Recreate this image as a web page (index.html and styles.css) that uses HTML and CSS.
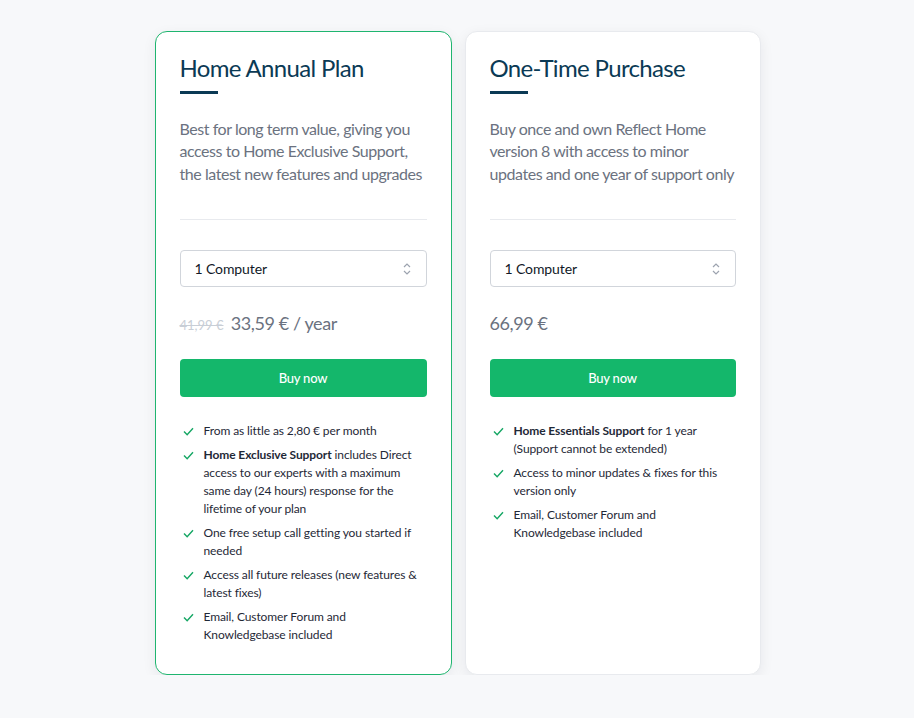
FILE: index.html
```html
<!DOCTYPE html>
<html lang="en">
<head>
  <meta charset="UTF-8">
  <title>Reflect Home – Plans</title>
  <link rel="stylesheet" href="styles.css">
</head>
<body>
  <div class="plans">
    <div class="card card-featured">
      <h2 class="card-title">Home Annual Plan</h2>
      <div class="title-bar"></div>
      <p class="desc">Best for long term value, giving you access to Home Exclusive Support, the latest new features and upgrades</p>
      <hr class="divider">
      <div class="picker">
        <span>1 Computer</span>
        <svg width="10" height="16" viewBox="0 0 10 16"><path d="M2 6 L5 3 L8 6 M2 10 L5 13 L8 10" fill="none" stroke="#9ca3af" stroke-width="1.2"/></svg>
      </div>
      <div class="price"><s class="old">41,99 €</s> 33,59 € / year</div>
      <button class="buy">Buy now</button>
      <ul class="features">
        <li><svg class="check" viewBox="0 0 12 10"><path d="M1 5 L4.5 8.5 L11 1.5" fill="none" stroke="#16a765" stroke-width="1.6"/></svg><span>From as little as 2,80 € per month</span></li>
        <li><svg class="check" viewBox="0 0 12 10"><path d="M1 5 L4.5 8.5 L11 1.5" fill="none" stroke="#16a765" stroke-width="1.6"/></svg><span><b>Home Exclusive Support</b> includes Direct access to our experts with a maximum same day (24 hours) response for the lifetime of your plan</span></li>
        <li><svg class="check" viewBox="0 0 12 10"><path d="M1 5 L4.5 8.5 L11 1.5" fill="none" stroke="#16a765" stroke-width="1.6"/></svg><span>One free setup call getting you started if needed</span></li>
        <li><svg class="check" viewBox="0 0 12 10"><path d="M1 5 L4.5 8.5 L11 1.5" fill="none" stroke="#16a765" stroke-width="1.6"/></svg><span>Access all future releases (new features &amp; latest fixes)</span></li>
        <li><svg class="check" viewBox="0 0 12 10"><path d="M1 5 L4.5 8.5 L11 1.5" fill="none" stroke="#16a765" stroke-width="1.6"/></svg><span>Email, Customer Forum and Knowledgebase included</span></li>
      </ul>
    </div>

    <div class="card">
      <h2 class="card-title">One-Time Purchase</h2>
      <div class="title-bar"></div>
      <p class="desc">Buy once and own Reflect Home version 8 with access to minor updates and one year of support only</p>
      <hr class="divider">
      <div class="picker">
        <span>1 Computer</span>
        <svg width="10" height="16" viewBox="0 0 10 16"><path d="M2 6 L5 3 L8 6 M2 10 L5 13 L8 10" fill="none" stroke="#9ca3af" stroke-width="1.2"/></svg>
      </div>
      <div class="price">66,99 €</div>
      <button class="buy">Buy now</button>
      <ul class="features">
        <li><svg class="check" viewBox="0 0 12 10"><path d="M1 5 L4.5 8.5 L11 1.5" fill="none" stroke="#16a765" stroke-width="1.6"/></svg><span><b>Home Essentials Support</b> for 1 year (Support cannot be extended)</span></li>
        <li><svg class="check" viewBox="0 0 12 10"><path d="M1 5 L4.5 8.5 L11 1.5" fill="none" stroke="#16a765" stroke-width="1.6"/></svg><span>Access to minor updates &amp; fixes for this version only</span></li>
        <li><svg class="check" viewBox="0 0 12 10"><path d="M1 5 L4.5 8.5 L11 1.5" fill="none" stroke="#16a765" stroke-width="1.6"/></svg><span>Email, Customer Forum and Knowledgebase included</span></li>
      </ul>
    </div>
  </div>
</body>
</html>
```

FILE: styles.css
```css
body {
  margin: 0;
  background: #f7f8fa;
  font-family: Lato, "Noto Sans", sans-serif;
}
.plans {
  display: grid;
  grid-template-columns: 297px 296px;
  gap: 13px;
  justify-content: center;
  padding: 31px 0 0 1px;
}
.card {
  background: #fff;
  border: 1px solid #e8eaee;
  border-radius: 12px;
  padding: 21px 24px 24px;
  box-shadow: 0 4px 14px rgba(15, 23, 42, 0.07);
}
.card-featured {
  border-color: #1fb56f;
}
.card-title {
  margin: 0;
  font-size: 24px;
  line-height: 29px;
  font-weight: 400;
  letter-spacing: -0.65px;
  color: #0b3a55;
}
.title-bar {
  width: 38px;
  height: 3px;
  margin-top: 9px;
  background: #0b3a55;
}
.desc {
  margin: 24px 0 0;
  font-size: 16px;
  line-height: 22.4px;
  letter-spacing: -0.45px;
  color: #6b7280;
}
.divider {
  margin: 34px 0 0;
  border: none;
  border-top: 1px solid #e8eaee;
}
.picker {
  margin-top: 30px;
  height: 35px;
  border: 1px solid #d1d5db;
  border-radius: 4px;
  padding: 0 14px;
  display: flex;
  align-items: center;
  justify-content: space-between;
  font-size: 14px;
  letter-spacing: -0.1px;
  color: #111827;
}
.price {
  margin: 23px 0 22px;
  height: 27px;
  font-size: 18px;
  line-height: 27px;
  letter-spacing: -0.4px;
  color: #6b7280;
}
.old {
  font-size: 13px;
  line-height: 1;
  letter-spacing: 0;
  margin-right: 3px;
  color: #c8ced6;
}
.buy {
  display: block;
  width: 100%;
  height: 38px;
  border: none;
  border-radius: 4px;
  background: #14b76b;
  color: #fff;
  font-family: inherit;
  font-size: 13px;
  font-weight: 500;
  letter-spacing: -0.2px;
  cursor: pointer;
}
.features {
  list-style: none;
  margin: 25px 0 0;
  padding: 0;
}
.features li {
  display: flex;
  gap: 10px;
  font-size: 12px;
  line-height: 18px;
  letter-spacing: -0.1px;
  color: #1f2937;
  margin-bottom: 6px;
}
.check {
  flex: none;
  width: 11px;
  height: 9px;
  margin: 5px 0 0 3px;
}
.features b {
  font-weight: 700;
}
```
